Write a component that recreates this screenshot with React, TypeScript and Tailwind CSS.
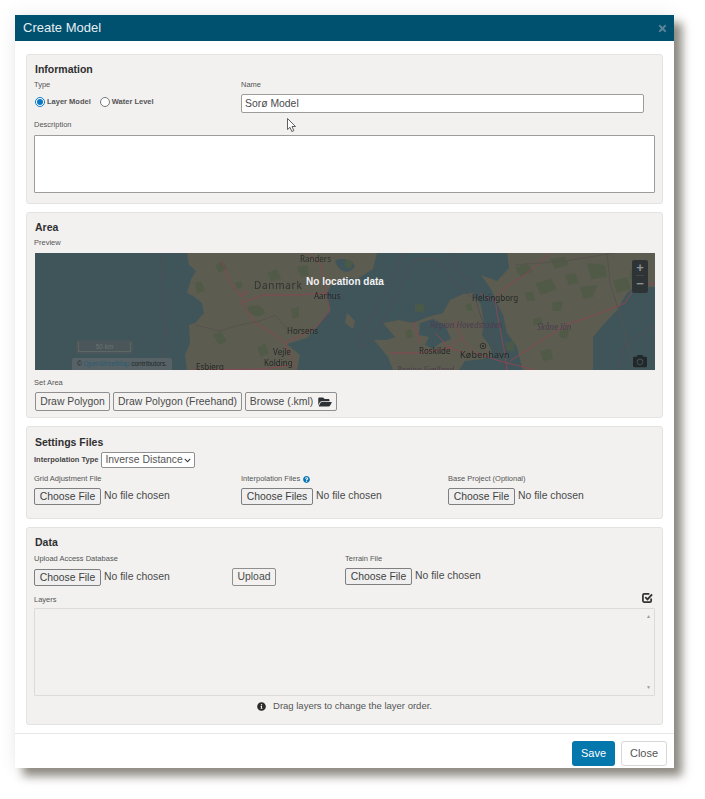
import React from "react";
import { FaChevronDown, FaFolderOpen, FaInfoCircle, FaQuestionCircle, FaTimes, FaCamera } from "react-icons/fa";

const labelCls = "block h-[10px] leading-[10px] text-[7.5px] text-[#555]";
const btnCls = "h-[19px] border border-[#8f8f8f] rounded-[2px] bg-[#f3f2f1] text-[10.4px] leading-[16px] text-[#4a4a4a] flex items-center justify-center";

function Panel({ title, className, children }: { title: string; className: string; children: React.ReactNode }) {
  return (
    <section className={"border border-[#e4e3e0] rounded-[3px] bg-[#f2f1f0] pl-[7px] pr-[7px] " + className}>
      <h2 className="pl-px h-[12px] leading-[12px] text-[10.5px] font-bold text-[#2f2f2f]">{title}</h2>
      {children}
    </section>
  );
}

function FileInput({ label = "Choose File", width = "w-[67px]" }: { label?: string; width?: string }) {
  return (
    <div className="flex items-center h-[16px]">
      <div className={"h-[17px] border border-[#7f7f7f] rounded-[2px] bg-[#efefef] text-[10.4px] leading-[15px] text-[#3f3f3f] text-center " + width}>{label}</div>
      <span className="ml-[3px] text-[10.4px] text-[#4a4a4a]">No file chosen</span>
    </div>
  );
}

const forests = [
  "M480 15 L492 10 L498 18 L486 24 Z", "M515 6 L530 4 L534 12 L520 16 Z", "M552 10 L570 12 L572 24 L556 26 Z",
  "M500 30 L516 26 L522 36 L506 42 Z", "M545 34 L562 32 L558 44 L548 46 Z", "M596 16 L608 20 L604 28 L594 26 Z",
  "M516 50 L528 48 L526 58 L518 58 Z", "M498 66 L506 64 L508 72 L498 72 Z", "M525 78 L534 76 L532 86 L524 84 Z",
  "M212 55 C218 50 228 52 230 60 C224 66 216 64 212 55 Z", "M180 12 L188 8 L192 16 L184 20 Z", "M232 20 L242 16 L246 26 L236 28 Z",
  "M178 82 L186 78 L192 88 L184 92 Z", "M222 95 L230 90 L234 100 L226 104 Z", "M160 30 L166 28 L170 38 L162 40 Z",
  "M262 14 L272 12 L274 22 L266 24 Z", "M200 30 L206 28 L208 34 L202 36 Z", "M256 56 L264 54 L264 64 L258 66 Z",
  "M380 50 L390 52 L388 60 L380 58 Z", "M370 78 L376 76 L378 84 L372 86 Z", "M430 52 L436 50 L438 58 L432 58 Z",
  "M310 6 L318 8 L316 16 L310 14 Z", "M470 90 L478 88 L480 98 L472 98 Z", "M505 98 L516 96 L518 106 L508 108 Z",
  "M578 28 L592 24 L596 36 L582 40 Z", "M530 22 L540 20 L544 30 L534 32 Z", "M490 40 L498 38 L500 48 L492 48 Z",
];

function MapArt() {
  const t = "#252927";
  const r = "#4d3d50";
  const land = "#5c5c50";
  return (
    <svg viewBox="0 0 620 117" className="block w-full h-full blur-[0.4px]" style={{ fontFamily: "'Noto Sans', sans-serif" }}>
      <rect width="620" height="117" fill="#40555a" />
      {/* Jutland */}
      <path d="M152 0 L154 12 L161 18 L156 26 L152 40 L158 43 L167 50 L169 60 L160 70 L154 72 L155 90 L150 102 L152 117 L262 117 L265 102 L252 91 L272 85 L282 74 L295 57 L291 44 L296 32 L303 30 L312 24 L322 26 L338 16 L342 0 Z" fill={land} />
      <path d="M300 8 C306 4 318 6 320 14 C314 22 304 20 300 8 Z" fill="#40555a" />
      <path d="M312 60 L320 68 L318 76 L310 70 Z" fill={land} />
      {/* Zealand */}
      <path d="M339 87 L352 87 L360 84 L348 70 L364 67 L378 70 L393 64 L408 60 L415 47 L428 41 L438 40 L446 52 L449 70 L447 82 L454 92 L458 103 L448 106 L430 108 L424 117 L358 117 L353 104 Z" fill={land} />
      <path d="M385 70 L398 66 L410 72 L416 86 L405 90 L398 96 L390 92 L394 84 L384 82 Z" fill="#40555a" />
      {/* Sweden */}
      <path d="M472 0 L474 15 L462 28 L446 22 L456 36 L462 50 L468 62 L472 80 L482 94 L485 107 L488 117 L558 117 L558 84 L568 72 L582 57 L592 40 L600 34 L620 34 L620 0 Z" fill={land} />
      {/* Sea borders */}
      <g fill="none" stroke="#504d52" strokeWidth="0.9">
        <path d="M125 0 C128 30 127 60 131 78 C128 95 126 105 125 117" />
        <path d="M366 0 C365 20 345 45 325 85 L324 95 L332 92 C350 70 365 35 378 7 L398 6 C410 8 413 22 415 25 L436 44" />
        <path d="M418 0 L420 15 L438 30 L440 45 L448 70 L472 117" />
        <path d="M582 117 L590 92 L620 72" />
      </g>
      {/* Forest patches */}
      <g fill="#4e5a45" opacity="0.8">
        {forests.map((d, i) => <path key={i} d={d} />)}
      </g>
      {/* Roads */}
      <g fill="none" stroke="#864853" strokeWidth="1">
        <path d="M187 8 L195 30 L205 42 L212 38 L207 46 L207 50 L228 42 L260 42 L292 40" />
        <path d="M207 50 L220 70 L240 82 L250 90 L262 117" />
        <path d="M250 90 L280 75 L295 58 L292 44 L285 10 L272 0" />
        <path d="M155 117 L230 116 L255 112" />
        <path d="M355 100 L385 100 L415 95 L425 85 L440 100 L465 108 L500 117" />
        <path d="M400 80 L415 95 L430 100 M378 68 L385 90 M418 68 L428 85" />
        <path d="M472 117 L470 102 L462 60 L460 45 L470 35 L495 18 L515 0" />
        <path d="M475 108 L510 85 L535 70 L560 62 L590 50 L600 34 L620 30" />
        <path d="M458 48 L445 40" />
      </g>
      {/* Land borders */}
      <g fill="none" stroke="#55504f" strokeWidth="0.8">
        <path d="M160 72 L185 78 L205 72 L225 68 L240 62 L252 76" />
        <path d="M480 12 L530 8 L580 0" />
        <path d="M572 0 L575 30 L585 62 L600 118" />
      </g>
      {/* Labels */}
      <g fill={t} fontSize="8">
        <text x="265" y="9" fillOpacity="0.85">Randers</text>
        <text x="219" y="35.5" fontSize="10" letterSpacing="0.7" fillOpacity="0.8">Danmark</text>
        <text x="279" y="46">Aarhus</text>
        <text x="252" y="80.5">Horsens</text>
        <text x="238" y="101.5">Vejle</text>
        <text x="229" y="113">Kolding</text>
        <text x="161" y="116.5">Esbjerg</text>
        <text x="437" y="47.5">Helsingborg</text>
        <text x="384" y="101">Roskilde</text>
        <text x="425" y="105" fontSize="9" letterSpacing="0.2">København</text>
        <text x="395" y="75" fontStyle="italic" fill={r}>Region Hovedstaden</text>
        <text x="502" y="76.5" fontStyle="italic" fill={r}>Skåne län</text>
        <text x="362" y="120" fontStyle="italic" fill={r}>Region Sjælland</text>
      </g>
      <circle cx="448" cy="93" r="2.8" fill="none" stroke="#26282a" strokeWidth="0.8" />
      <circle cx="448" cy="93" r="1" fill="#26282a" />
    </svg>
  );
}

export default function App() {
  return (
    <div className="min-h-[799px] bg-white pl-[15px] pt-[15px] text-[#444] [font-family:'Liberation_Sans',Arial,sans-serif]">
      <div className="relative w-[659px] h-[753px] bg-white shadow-[8px_8px_9px_rgba(70,65,50,0.6),0_0_18px_rgba(0,0,0,0.08)]">
        <header className="h-[26px] bg-[#00506f] flex items-center justify-between pl-[8px] pr-[6px]">
          <h1 className="text-[13px] text-[#e6eef1]">Create Model</h1>
          <FaTimes className="w-[11px] h-[11px] text-[#5d8398]" />
        </header>

        <div className="px-[11px] pt-[13px] flex flex-col gap-[8px]">
          <Panel title="Information" className="h-[150px] pt-[8px]">
            <div className="mt-[5px] grid grid-cols-[207px_403px]">
              <div>
                <span className={labelCls}>Type</span>
                <div className="mt-[5px] h-[14px] flex items-center text-[7.5px] font-bold text-[#555]">
                  <input type="radio" name="t" defaultChecked className="w-[10px] h-[10px] m-0 ml-px accent-[#0a78c2]" />
                  <span className="ml-[2px]">Layer Model</span>
                  <input type="radio" name="t" className="w-[10px] h-[10px] m-0 ml-[9px] accent-[#0a78c2]" />
                  <span className="ml-[2px]">Water Level</span>
                </div>
              </div>
              <div>
                <span className={labelCls}>Name</span>
                <input defaultValue="Sorø Model" className="mt-[4px] block w-full h-[19px] px-[3px] bg-white border border-[#9d9c98] rounded-[2px] text-[10.4px] text-[#4a4a4a]" />
              </div>
            </div>
            <span className={labelCls + " mt-[7px]"}>Description</span>
            <textarea className="mt-[5px] block w-[621px] h-[58px] bg-white border border-[#9d9c98] rounded-[1px] resize-none" />
          </Panel>

          <Panel title="Area" className="h-[206px] pt-[8px]">
            <span className={labelCls + " mt-[5px]"}>Preview</span>
            <div className="relative mt-[5px] ml-px w-[620px] h-[117px] overflow-hidden">
              <MapArt />
              <div className="absolute top-[22px] inset-x-0 text-center text-[10px] leading-[14px] font-bold text-[#f2f2f2]">No location data</div>
              <div className="absolute right-[7px] top-[7px] w-[16px] h-[33px] rounded-[2px] bg-[#2e3436] flex flex-col items-center text-[#8c9194] text-[13px] font-bold leading-[16px]">
                <span className="h-[16px] border-b border-[#444]">+</span>
                <span className="h-[16px]">−</span>
              </div>
              <div className="absolute left-[41px] top-[87px] w-[57px] h-[14px] rounded-[2px] bg-[#4a5659] p-[2px]">
                <div className="h-full border border-t-0 border-[#5c6764] text-center text-[6.5px] leading-[9px] text-[#6b7570]">50 km</div>
              </div>
              <div className="absolute left-[37px] bottom-0 w-[100px] h-[12px] rounded-tl-[2px] rounded-tr-[2px] bg-[#566265] text-center text-[6.5px] leading-[12px] text-[#23282a] whitespace-nowrap">
                © <span className="text-[#2b5c74]">OpenStreetMap</span> contributors.
              </div>
              <div className="absolute right-[8px] bottom-[2px] text-[#22282a] text-[14px]"><FaCamera /></div>
            </div>
            <span className={labelCls + " mt-[8px]"}>Set Area</span>
            <div className="mt-[4px] ml-px flex gap-[3px]">
              <button className={btnCls + " w-[75px]"}>Draw Polygon</button>
              <button className={btnCls + " w-[129px]"}>Draw Polygon (Freehand)</button>
              <button className={btnCls + " w-[92px]"}>Browse (.kml)<FaFolderOpen className="ml-[5px] w-[14px] h-[12px] text-[#2f3235]" /></button>
            </div>
          </Panel>

          <Panel title="Settings Files" className="h-[93px] pt-[9px]">
            <div className="mt-[4px] flex items-center h-[16px]">
              <span className="text-[7.5px] font-bold text-[#444]">Interpolation Type</span>
              <div className="relative ml-[3px] w-[94px] h-[16px]">
                <select className="block appearance-none w-full h-full pl-[3px] bg-white border border-[#8f8f8f] rounded-[2px] text-[10.4px] leading-[14px] text-[#555]">
                  <option>Inverse Distance</option>
                </select>
                <FaChevronDown className="absolute right-[4px] top-[5px] w-[7px] h-[7px] text-[#333]" />
              </div>
            </div>
            <div className="mt-[6px] grid grid-cols-[207px_207px_1fr]">
              <div>
                <span className={labelCls}>Grid Adjustment File</span>
                <div className="mt-[4px]"><FileInput /></div>
              </div>
              <div>
                <span className={labelCls + " flex items-center"}>Interpolation Files<FaQuestionCircle className="ml-[3px] w-[7px] h-[7px] text-[#0a78b8]" /></span>
                <div className="mt-[4px]"><FileInput label="Choose Files" width="w-[72px]" /></div>
              </div>
              <div>
                <span className={labelCls}>Base Project (Optional)</span>
                <div className="mt-[4px]"><FileInput /></div>
              </div>
            </div>
          </Panel>

          <Panel title="Data" className="h-[198px] pt-[8px]">
            <div className="mt-[6px] grid grid-cols-[197px_114px_1fr]">
              <div>
                <span className={labelCls}>Upload Access Database</span>
                <div className="mt-[5px]"><FileInput /></div>
              </div>
              <div className="pt-[14px] pl-px">
                <button className="h-[18px] w-[44px] border border-[#8f8f8f] rounded-[2px] bg-[#f3f2f1] text-[10.4px] text-[#4a4a4a] flex items-center justify-center">Upload</button>
              </div>
              <div>
                <span className={labelCls}>Terrain File</span>
                <div className="mt-[4px]"><FileInput /></div>
              </div>
            </div>
            <div className="mt-[9px] flex items-start justify-between h-[10px]">
              <span className={labelCls}>Layers</span>
              <svg viewBox="0 0 12 12" className="mr-[2px] -mt-[3px] w-[11px] h-[11px]" fill="none" stroke="#333" strokeWidth="1.9">
                <path d="M10 7 V9.5 A1.5 1.5 0 0 1 8.5 11 H2.5 A1.5 1.5 0 0 1 1 9.5 V3.5 A1.5 1.5 0 0 1 2.5 2 H8" />
                <path d="M3.5 5.5 L6 8 L11 2.5" strokeWidth="2" />
              </svg>
            </div>
            <div className="mt-[3px] h-[88px] border border-[#dcdbd8] rounded-[1px] flex flex-col items-end justify-between py-[5px] pr-[3px] text-[5px] leading-[5px] text-[#9a9a9a]">
              <span>▲</span>
              <span>▼</span>
            </div>
            <div className="mt-[4px] h-[12px] flex items-center justify-center text-[9.5px] text-[#555]">
              <FaInfoCircle className="w-[9px] h-[9px] mr-[7px] text-[#2b2b2b]" />
              Drag layers to change the layer order.
            </div>
          </Panel>
        </div>

        <footer className="absolute inset-x-0 bottom-0 h-[35px] border-t border-[#e8e7e5] flex items-start justify-end gap-[6px] pt-[7px] pr-[7px]">
          <button className="w-[43px] h-[25px] rounded-[3px] bg-[#0477ad] text-[11px] text-white">Save</button>
          <button className="w-[46px] h-[25px] rounded-[3px] border border-[#d8d8d8] bg-white text-[11px] text-[#555]">Close</button>
        </footer>

        <svg className="absolute left-[272px] top-[103px] w-[10px] h-[15px]" viewBox="0 0 10 15">
          <path d="M0.5 0.5 L0.5 11.5 L3 9.3 L4.8 13.5 L6.8 12.6 L5 8.5 L8.5 8.5 Z" fill="#fff" stroke="#3a3a3a" strokeWidth="0.8" />
        </svg>
      </div>
    </div>
  );
}
